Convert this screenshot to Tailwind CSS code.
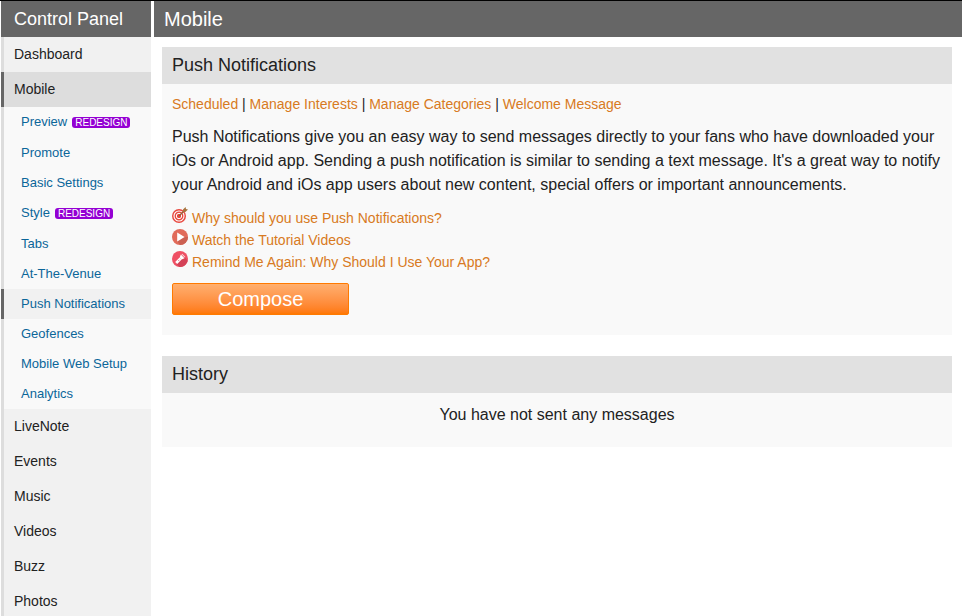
<!DOCTYPE html>
<html lang="en">
<head>
  <meta charset="UTF-8" />
  <meta name="viewport" content="width=device-width, initial-scale=1.0"/>
  <title>Mobile | Push Notifications</title>
  <script src="https://cdn.jsdelivr.net/npm/@tailwindcss/browser@4"></script>
  <style>body { font-family: 'Liberation Sans', Arial, sans-serif; }</style>
</head>
<body class="bg-white text-[#222222] border-t border-black overflow-hidden">
  <div class="flex min-h-screen pl-px gap-[3px]">

    <!-- Sidebar -->
    <aside class="w-[150px] shrink-0 bg-[#f1f1f1] h-screen overflow-hidden">
      <h2 class="h-9 leading-9 pl-[13px] bg-[#666666] text-white text-lg">Control Panel</h2>
      <nav class="text-sm leading-[35px]">
        <a href="#" class="block h-[35px] pl-[10px] border-l-3 border-[#dddddd]">Dashboard</a>
        <a href="#" class="block h-[35px] pl-[10px] border-l-3 border-[#666666] bg-[#dddddd]">Mobile</a>
        <div class="bg-[#f9f9f9] text-[13px] leading-[30px] text-[#0b6699]">
          <a href="#" class="flex items-start h-[31px] gap-[5px] pl-[17px] leading-[29px] border-l-3 border-[#dddddd]">Preview <span class="mt-[10px] px-[3px] rounded-[3px] bg-[#9400d3] text-white text-[10px] leading-[11px]">REDESIGN</span></a>
          <a href="#" class="block h-[30px] pl-[17px] border-l-3 border-[#dddddd]">Promote</a>
          <a href="#" class="block h-[30px] pl-[17px] border-l-3 border-[#dddddd]">Basic Settings</a>
          <a href="#" class="flex items-start h-[31px] gap-[5px] pl-[17px] leading-[29px] border-l-3 border-[#dddddd]">Style <span class="mt-[10px] px-[3px] rounded-[3px] bg-[#9400d3] text-white text-[10px] leading-[11px]">REDESIGN</span></a>
          <a href="#" class="block h-[30px] pl-[17px] border-l-3 border-[#dddddd]">Tabs</a>
          <a href="#" class="block h-[30px] pl-[17px] border-l-3 border-[#dddddd]">At-The-Venue</a>
          <a href="#" class="block h-[30px] pl-[17px] border-l-3 border-[#666666] bg-[#f1f1f1]">Push Notifications</a>
          <a href="#" class="block h-[30px] pl-[17px] border-l-3 border-[#dddddd]">Geofences</a>
          <a href="#" class="block h-[30px] pl-[17px] border-l-3 border-[#dddddd]">Mobile Web Setup</a>
          <a href="#" class="block h-[30px] pl-[17px] border-l-3 border-[#dddddd]">Analytics</a>
        </div>
        <a href="#" class="block h-[35px] pl-[10px] border-l-3 border-[#dddddd]">LiveNote</a>
        <a href="#" class="block h-[35px] pl-[10px] border-l-3 border-[#dddddd]">Events</a>
        <a href="#" class="block h-[35px] pl-[10px] border-l-3 border-[#dddddd]">Music</a>
        <a href="#" class="block h-[35px] pl-[10px] border-l-3 border-[#dddddd]">Videos</a>
        <a href="#" class="block h-[35px] pl-[10px] border-l-3 border-[#dddddd]">Buzz</a>
        <a href="#" class="block h-[35px] pl-[10px] border-l-3 border-[#dddddd]">Photos</a>
      </nav>
    </aside>

    <!-- Main -->
    <main class="flex-1 min-w-0">
      <h1 class="h-9 leading-9 pl-[10px] bg-[#666666] text-white text-xl">Mobile</h1>

      <div class="pt-[10px] pl-2 pr-[10px]">
        <!-- Push Notifications -->
        <section class="bg-[#f9f9f9]">
          <h2 class="h-[37px] leading-9 pl-[10px] bg-[#e1e1e1] text-lg">Push Notifications</h2>
          <div class="px-[10px] pt-[10px] pb-5">
            <div class="text-sm leading-5">
              <a href="#" class="text-[#d87a22]">Scheduled</a> |
              <a href="#" class="text-[#d87a22]">Manage Interests</a> |
              <a href="#" class="text-[#d87a22]">Manage Categories</a> |
              <a href="#" class="text-[#d87a22]">Welcome Message</a>
            </div>
            <p class="mt-[11px] text-base leading-6">Push Notifications give you an easy way to send messages directly to your fans who have downloaded your iOs or Android app. Sending a push notification is similar to sending a text message. It's a great way to notify your Android and iOs app users about new content, special offers or important announcements.</p>

            <ul class="mt-[10px] text-sm leading-[22px] text-[#d87a22]">
              <li>
                <a href="#" class="flex items-start gap-1 h-[22px]">
                  <svg class="w-4 h-4 shrink-0" viewBox="0 0 16 16" fill="none">
                    <circle cx="7" cy="9" r="7" fill="#e8483f"/>
                    <circle cx="7" cy="9" r="5" stroke="#fff" stroke-width="1.1"/>
                    <circle cx="7" cy="9" r="2.7" stroke="#fff" stroke-width="1"/>
                    <path d="M7 9L13.5 2.5" stroke="#8f6238" stroke-width="1.3"/>
                    <path d="M10.800 5L11 2.600L13.600 0L14 2L16 2.400L13.400 5Z" fill="#a8743f"/>
                  </svg>
                  Why should you use Push Notifications?
                </a>
              </li>
              <li>
                <a href="#" class="flex items-start gap-1 h-[22px]">
                  <svg class="w-4 h-4 shrink-0" viewBox="0 0 16 16" fill="none">
                    <circle cx="8" cy="8" r="8" fill="#e16b5a"/>
                    <path d="M8 16A8 8 0 0 0 16 8L12 8L5.500 12.500Z" fill="#cb6052"/>
                    <path d="M5.200 3.500L12.600 8L5.200 12.500Z" fill="#fff"/>
                  </svg>
                  Watch the Tutorial Videos
                </a>
              </li>
              <li>
                <a href="#" class="flex items-start gap-1 h-[22px]">
                  <svg class="w-4 h-4 shrink-0" viewBox="0 0 16 16" fill="none">
                    <circle cx="8" cy="8" r="8" fill="#ef5064"/>
                    <path d="M5 12.300L12.700 6L15.700 9.800A8 8 0 0 1 7.200 16L4 12.500Z" fill="#d44257"/>
                    <path d="M3.200 11L7.600 6.600L9.600 8.600L5.200 13Z" fill="#fff"/>
                    <path d="M7.700 6.600L8.800 3.600L12.500 7.300L9.600 8.500Z" fill="#fff"/>
                    <path d="M9.500 3.300L10.200 2.700L13.300 5.900L12.700 6.600Z" fill="#f6dfe2"/>
                    <path d="M6.500 9.700L7.300 8.900" stroke="#d44257" stroke-width="1"/>
                  </svg>
                  Remind Me Again: Why Should I Use Your App?
                </a>
              </li>
            </ul>

            <button type="button" class="block mt-[10px] w-[177px] h-8 rounded-[2px] border border-[#ff7a00] bg-linear-to-b from-[#ffaf6e] to-[#ff7800] text-white text-xl leading-[30px] cursor-pointer">Compose</button>
          </div>
        </section>

        <!-- History -->
        <section class="mt-[21px] bg-[#f9f9f9]">
          <h2 class="h-[37px] leading-9 pl-[10px] bg-[#e1e1e1] text-lg">History</h2>
          <p class="pt-[10px] pb-5 text-base leading-6 text-center">You have not sent any messages</p>
        </section>
      </div>
    </main>
  </div>
</body>
</html>
